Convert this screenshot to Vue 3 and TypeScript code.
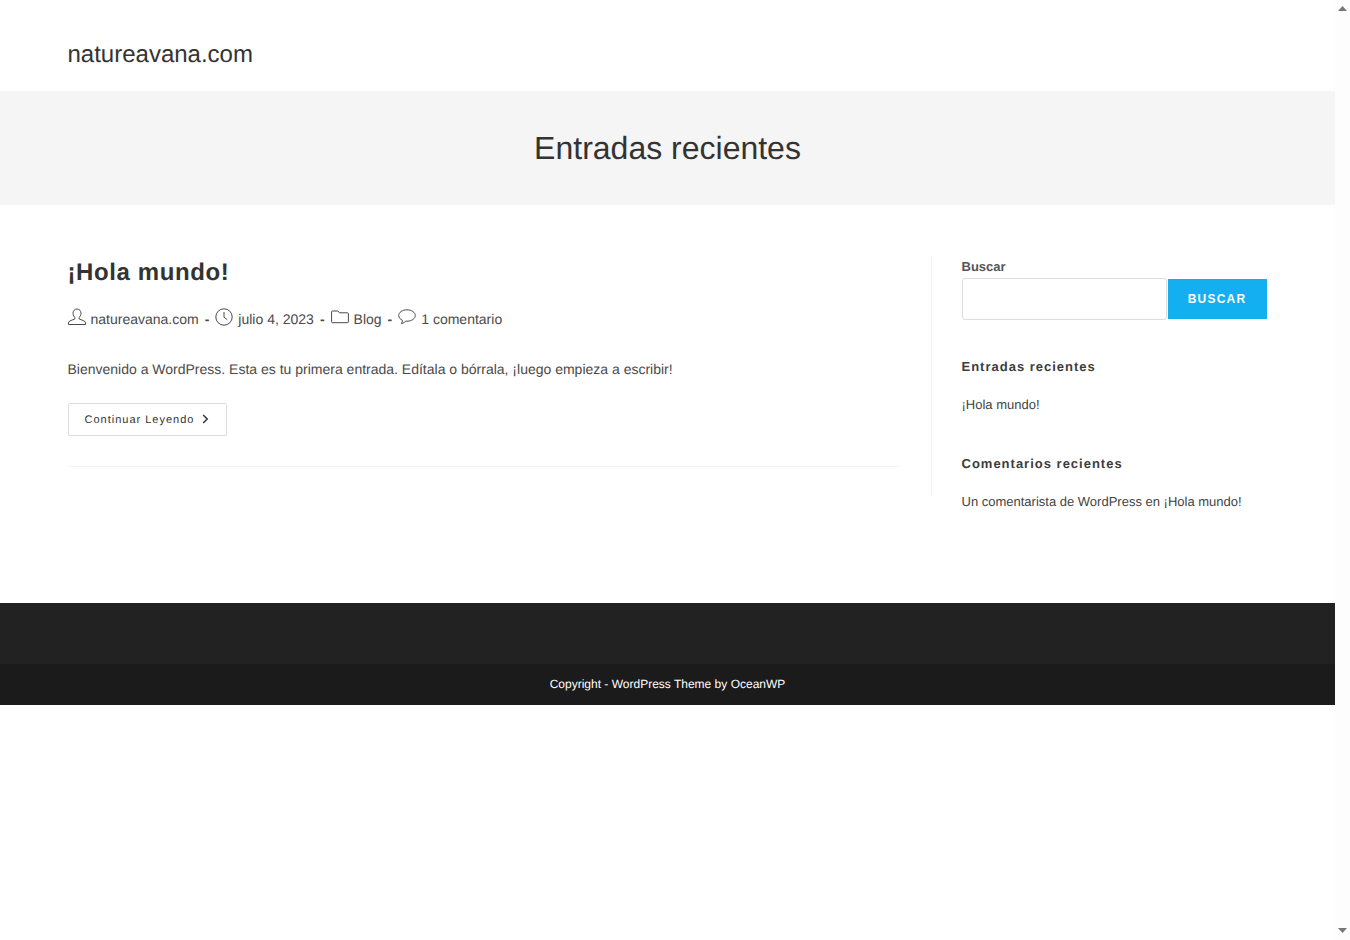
<script setup lang="ts">
const metaColor = '#4a4a4a'
</script>

<template>
  <div class="shell">
    <div class="page">
      <header class="top"><div class="wrap"><span class="logo">natureavana.com</span></div></header>
      <section class="hero"><h1>Entradas recientes</h1></section>
      <main class="wrap main">
        <div class="content">
          <article class="post">
            <h2>¡Hola mundo!</h2>
            <ul class="meta">
              <li>
                <svg width="18" height="18" viewBox="0 0 18 18" fill="none" :stroke="metaColor" stroke-width="1">
                  <path d="M9 1c-2.400 0-4 1.900-4 4.300 0 1.900.9 3.400 2 4.200v1.300L1.900 13c-.9.4-1.400 1-1.400 2v1.500h17V15c0-1-.5-1.600-1.400-2L11 10.800V9.500c1.100-.8 2-2.300 2-4.200C13 2.900 11.400 1 9 1z" />
                </svg>
                <span>natureavana.com</span>
              </li>
              <li class="sep">-</li>
              <li>
                <svg width="18" height="18" viewBox="0 0 18 18" fill="none" :stroke="metaColor" stroke-width="1">
                  <circle cx="9" cy="9" r="8.200" />
                  <path d="M9 4v5.200l3.200 2.400" />
                </svg>
                <span>julio 4, 2023</span>
              </li>
              <li class="sep">-</li>
              <li>
                <svg width="18" height="18" viewBox="0 0 18 18" fill="none" :stroke="metaColor" stroke-width="1">
                  <path d="M.6 3.500v10.400c0 .5.300.8.800.8h15.200c.5 0 .8-.3.800-.8V5.600c0-.5-.3-.8-.8-.8H8.400L6.900 3H1.400c-.5 0-.8.100-.8.500z" />
                </svg>
                <span>Blog</span>
              </li>
              <li class="sep">-</li>
              <li>
                <svg width="18" height="18" viewBox="0 0 18 18" fill="none" :stroke="metaColor" stroke-width="1">
                  <path d="M9 1.800c-4.600 0-8.300 2.600-8.300 5.700 0 2 1.500 3.700 3.700 4.700.1 1.100-.3 2.500-1 3.400 1.700-.2 3.400-1.300 4.300-2.500.4.100.9.100 1.300.100 4.600 0 8.300-2.600 8.300-5.700S13.600 1.800 9 1.800z" />
                </svg>
                <span>1 comentario</span>
              </li>
            </ul>
            <p class="summary">Bienvenido a WordPress. Esta es tu primera entrada. Edítala o bórrala, ¡luego empieza a escribir!</p>
            <a class="more">
              <span>Continuar Leyendo</span>
              <svg class="chevron" width="7" height="10" viewBox="0 0 7 10" fill="none" stroke="#333" stroke-width="1.500"><path d="M1.200 1l4 4-4 4" /></svg>
            </a>
          </article>
        </div>
        <aside class="side">
          <section class="w-search">
            <label>Buscar</label>
            <div class="search-row">
              <input type="text" aria-label="Buscar" />
              <button type="button">BUSCAR</button>
            </div>
          </section>
          <section class="widget">
            <h4>Entradas recientes</h4>
            <p>¡Hola mundo!</p>
          </section>
          <section class="widget">
            <h4>Comentarios recientes</h4>
            <p>Un comentarista de WordPress en ¡Hola mundo!</p>
          </section>
        </aside>
      </main>
      <footer>
        <div class="foot-widgets"></div>
        <div class="foot-bottom">Copyright - WordPress Theme by OceanWP</div>
      </footer>
    </div>
    <div class="scrollbar" aria-hidden="true">
      <svg width="9" height="5" viewBox="0 0 9 5"><path d="M4.500 0L9 5H0z" fill="#777" /></svg>
      <svg width="9" height="5" viewBox="0 0 9 5"><path d="M0 0h9L4.500 5z" fill="#777" /></svg>
    </div>
  </div>
</template>

<style>
html, body { margin: 0; background: #fff; overflow: hidden; }
</style>

<style scoped>
.shell {
  display: flex;
  height: 940px;
  font-family: "Liberation Sans", Arial, sans-serif;
  color: #333;
  text-rendering: geometricPrecision;
}
.page { width: 1335px; flex: none; }
.scrollbar {
  flex: 1;
  background: #fdfdfd;
  display: flex;
  flex-direction: column;
  justify-content: space-between;
  align-items: center;
  padding: 6px 0 7px;
  box-sizing: border-box;
}
.scrollbar svg { display: block; }
.wrap { width: 1200px; margin: 0 auto; }
.top { height: 91px; }
.top .wrap { height: 91px; box-sizing: border-box; display: flex; align-items: center; padding-top: 18px; }
.logo { font-size: 24px; line-height: 28px; color: #333; }
.hero {
  height: 114px;
  background: #f5f5f5;
  display: flex;
  align-items: center;
  justify-content: center;
}
.hero h1 { margin: 0; font-size: 32px; font-weight: 400; line-height: 40px; color: #333; }
.main { display: flex; align-items: flex-start; padding-top: 51px; height: 398px; box-sizing: border-box; }
.content {
  width: 864px;
  height: 240px;
  box-sizing: border-box;
  padding-right: 31px;
  border-right: 1px solid #f1f1f1;
  flex: none;
}
.post { border-bottom: 1px solid #f3f3f3; height: 211px; padding-top: 1px; box-sizing: border-box; }
.post h2 {
  margin: 0;
  font-size: 24px;
  line-height: 32px;
  font-weight: 700;
  letter-spacing: 0.6px;
  color: #333;
}
.meta {
  list-style: none;
  margin: 18px 0 0;
  padding: 0;
  display: flex;
  align-items: center;
  height: 24px;
  font-size: 14px;
  color: #4a4a4a;
}
.meta li { display: flex; align-items: center; }
.meta li svg { margin-right: 5px; position: relative; top: -2px; }
.meta .sep { margin: 0 6px 0 6px; font-weight: 700; }
.summary { margin: 26px 0 0; font-size: 14px; line-height: 24px; color: #4a4a4a; }
.more {
  margin-top: 22px;
  width: 159px;
  height: 33px;
  box-sizing: border-box;
  border: 1px solid #ddd;
  border-radius: 2px;
  display: flex;
  align-items: center;
  padding-left: 16px;
  gap: 8px;
  font-size: 11px;
  letter-spacing: 1px;
  color: #333;
}
.chevron { margin-bottom: 2px; }
.side { margin-left: 30px; width: 306px; flex: none; }
.w-search label { display: block; font-size: 13px; font-weight: 700; color: #555; line-height: 15px; margin-top: 3px; margin-bottom: 4px; }
.search-row { display: flex; align-items: center; gap: 1px; }
.search-row input {
  width: 205px;
  height: 42px;
  box-sizing: border-box;
  border: 1px solid #ddd;
  border-radius: 3px;
  background: #fff;
  padding: 0;
  outline: none;
}
.search-row button {
  width: 99px;
  height: 40px;
  border: 0;
  background: #13aff0;
  color: #fff;
  font-family: inherit;
  font-size: 12px;
  font-weight: 700;
  letter-spacing: 1.2px;
  padding: 0;
}
.widget h4 {
  margin: 0;
  font-size: 13px;
  line-height: 16px;
  font-weight: 700;
  letter-spacing: 1px;
  color: #3c3c3c;
}
.widget p { margin: 22px 0 0; font-size: 13px; line-height: 16px; color: #444; }
.w-search + .widget { margin-top: 39px; }
.widget + .widget { margin-top: 43px; }
footer { background: #222; }
.foot-widgets { height: 61px; }
.foot-bottom {
  height: 41px;
  padding-bottom: 2px;
  box-sizing: border-box;
  background: #1b1b1b;
  display: flex;
  align-items: center;
  justify-content: center;
  font-size: 12px;
  color: #fff;
}
</style>
